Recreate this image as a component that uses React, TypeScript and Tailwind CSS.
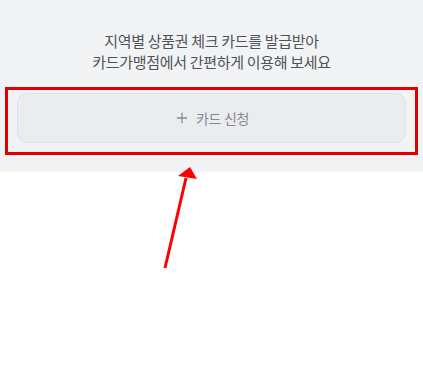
import { Plus } from 'lucide-react';

const App = () => {
  return (
    <div
      className="relative w-[423px] h-[366px] bg-white"
      style={{ fontFamily: '"Noto Sans CJK KR", "Noto Sans", sans-serif' }}
    >
      <section className="bg-[#f2f3f5] pt-[30px] pb-[29px] px-[17px]">
        <p className="text-center text-[15px] leading-[21px] text-[#4f5358] tracking-[-0.3px]">
          지역별 상품권 체크 카드를 발급받아
          <br />
          카드가맹점에서 간편하게 이용해 보세요
        </p>
        <button className="mt-[21px] w-full h-[50px] flex items-center justify-center gap-[6px] rounded-[10px] border border-[#dfe1e4] bg-[#ebecee] text-[14px] text-[#868a90]">
          <Plus size={16} strokeWidth={1.9} />
          <span className="tracking-[-0.3px]">카드 신청</span>
        </button>
      </section>

      {/* annotation overlay */}
      <div className="absolute left-[5px] top-[87px] w-[413px] h-[68px] border-[3px] border-[#e30000]" />
      <svg className="absolute left-0 top-0" width="423" height="366" viewBox="0 0 423 366">
        <line x1="165" y1="268" x2="186" y2="178" stroke="#f00" strokeWidth="3" />
        <polygon points="190,167 178,176 197,179" fill="#f00" />
      </svg>
    </div>
  );
};

export default App;
